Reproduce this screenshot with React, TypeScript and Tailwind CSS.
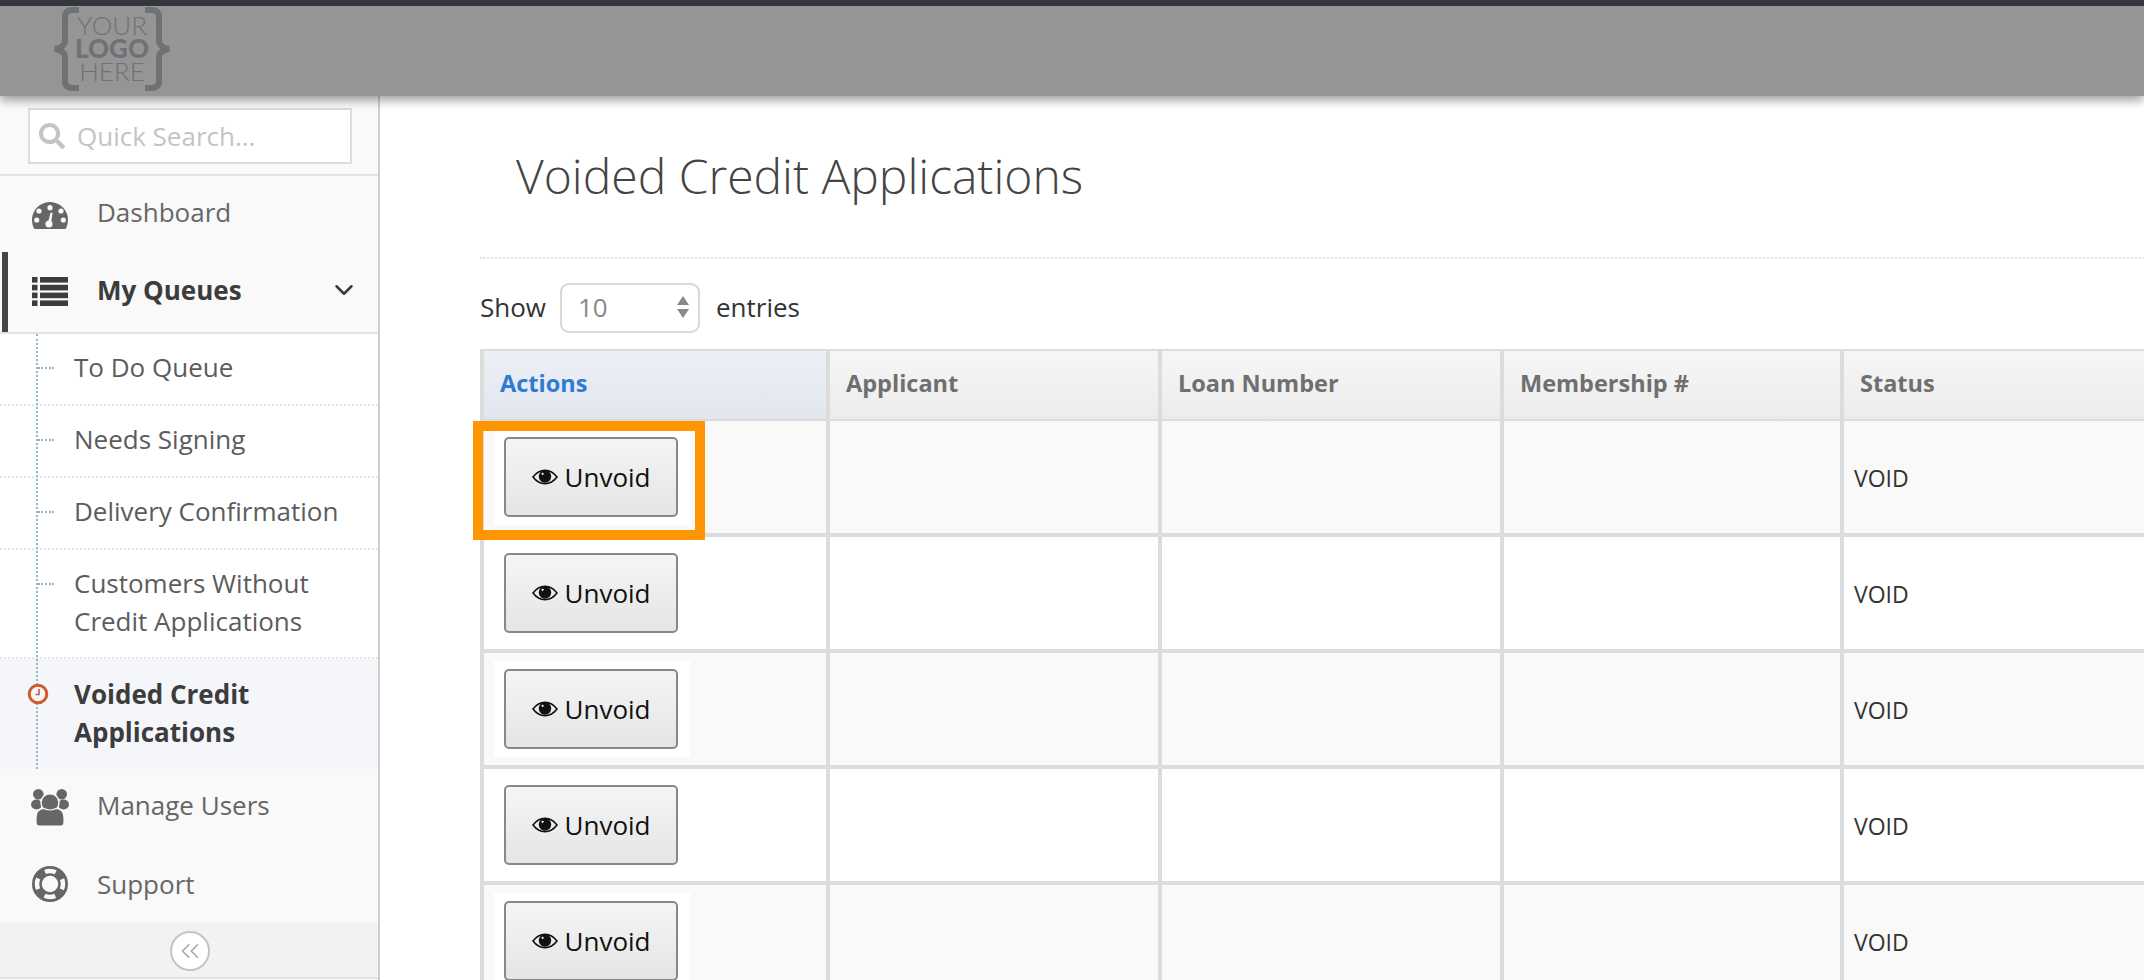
import { ChevronDown, ChevronsLeft } from 'lucide-react';
import { FaSearch } from 'react-icons/fa';

const font = "font-['Open_Sans','Liberation_Sans',sans-serif]";

const subItems = [
  { label: ['To Do Queue'], h: 'h-[72px]' },
  { label: ['Needs Signing'], h: 'h-[72px]' },
  { label: ['Delivery Confirmation'], h: 'h-[72px]' },
  { label: ['Customers Without', 'Credit Applications'], h: 'h-[109px]' },
];

const Logo = () => (
  <div className="relative mt-[1px] ml-[53px] flex h-[84px] w-[118px] flex-col items-center justify-center pb-[2px] text-[#707175]">
    <svg viewBox="0 0 118 84" className="absolute inset-0 h-full w-full" fill="none" stroke="currentColor" strokeWidth="6">
      <path d="M26 3h-6q-8 0-8 7v24q0 6-10 8 10 2 10 8v24q0 7 8 7h6" />
      <path d="M92 3h6q8 0 8 7v24q0 6 10 8-10 2-10 8v24q0 7-8 7h-6" />
    </svg>
    <span className="font-['Lato',sans-serif] text-[26px] leading-[23px] font-light">YOUR</span>
    <span className="font-['Lato',sans-serif] text-[26px] leading-[23px] font-black">LOGO</span>
    <span className="font-['Lato',sans-serif] text-[26px] leading-[23px] font-light">HERE</span>
  </div>
);

const GaugeIcon = () => (
  <svg viewBox="0 0 36 27" className="h-[27px] w-[36px]">
    <path d="M2.4 27A18 18 0 1 1 33.6 27z" fill="#666" />
    <g fill="#f9f9f9">
      <circle cx="18" cy="5.7" r="2.6" />
      <circle cx="7" cy="9" r="2.6" />
      <circle cx="29" cy="9" r="2.6" />
      <circle cx="4.7" cy="18" r="2.6" />
      <circle cx="31.3" cy="18" r="2.6" />
      <circle cx="17" cy="22" r="3.6" />
      <path d="M18.6 10.6l2 .5-1.6 10-3-.6z" />
    </g>
  </svg>
);

const ListIcon = () => (
  <svg viewBox="0 0 36 29" className="h-[29px] w-[36px]" fill="#3c3c3c">
    {[0, 7.8, 15.6, 23.4].map((y) => (
      <g key={y}>
        <rect x="0" y={y} width="5.5" height="5.6" />
        <rect x="8" y={y} width="28" height="5.6" />
      </g>
    ))}
  </svg>
);

const UsersIcon = () => (
  <svg viewBox="0 0 38 37" className="h-[37px] w-[38px]" fill="#666">
    <circle cx="7.3" cy="5.3" r="5.3" />
    <circle cx="30.7" cy="5.3" r="5.3" />
    <ellipse cx="5.5" cy="15.5" rx="5.5" ry="5" />
    <ellipse cx="32.5" cy="15.5" rx="5.5" ry="5" />
    <circle cx="19" cy="13.7" r="9" stroke="#f9f9f9" strokeWidth="1.4" />
    <path d="M5 34V29q0-9 8-9.5 6 3 12 0 8 .5 8 9.5v5q0 3-3 3H8q-3 0-3-3z" stroke="#f9f9f9" strokeWidth="1.2" />
  </svg>
);

const RingIcon = () => (
  <svg viewBox="0 0 36 36" className="h-[36px] w-[36px]">
    <circle cx="18" cy="18" r="18" fill="#666" />
    <circle cx="18" cy="18" r="13" fill="none" stroke="#f9f9f9" strokeWidth="4.5" strokeDasharray="11 9.42" strokeDashoffset="5.5" />
    <circle cx="18" cy="18" r="8.2" fill="#f9f9f9" />
  </svg>
);

const Sidebar = () => (
  <aside className="flex h-full w-[380px] shrink-0 flex-col border-r-2 border-[#cfcfcf] bg-[#f9f9f9]">
    <div className="h-[80px] shrink-0 border-b-2 border-[#e3e3e3] pt-[12px] pl-[28px]">
      <div className="flex h-[56px] w-[324px] items-center border-2 border-[#dcdcdf] bg-white pl-[9px]">
        <FaSearch className="h-[26px] w-[26px] text-[#c4c4c4]" />
        <span className="ml-[12px] text-[26px] text-[#c4c4c4]">Quick Search...</span>
      </div>
    </div>
    <div className="flex h-[78px] shrink-0 items-center pl-[32px] text-[#666]">
      <GaugeIcon />
      <span className="mb-[6px] ml-[29px] text-[26px]">Dashboard</span>
    </div>
    <div className="relative flex h-[80px] shrink-0 items-center border-b-2 border-[#e3e3e3] pl-[32px] text-[#3c3c3c]">
      <span className="absolute top-[-2px] left-[2px] h-[80px] w-[6px] bg-[#444]" />
      <div className="mb-[4px] flex">
        <ListIcon />
      </div>
      <span className="mb-[6px] ml-[29px] text-[26px] font-bold">My Queues</span>
      <ChevronDown className="absolute right-[19px] mb-[6px] h-[30px] w-[30px]" strokeWidth={2} />
    </div>
    <div className="relative shrink-0 bg-white">
      {subItems.map((item) => (
        <div key={item.label[0]} className={`relative flex ${item.h} items-start border-b-2 border-dotted border-[#e4e4e4] pt-[14px] pl-[74px] text-[26px] leading-[38px] text-[#5c5c5c]`}>
          <span className="absolute top-[33px] left-[38px] w-[16px] border-t-2 border-dotted border-[#8fb8d8]" />
          <div>
            {item.label.map((l) => (
              <div key={l}>{l}</div>
            ))}
          </div>
        </div>
      ))}
      <div className="relative h-[110px] bg-[#f5f6fa] pt-[16px] pl-[74px] text-[26px] leading-[38px] font-bold text-[#3c3c3c]">
        <div>Voided Credit</div>
        <div>Applications</div>
      </div>
      <span className="absolute top-0 bottom-0 left-[36px] border-l-2 border-dotted border-[#8fb8d8]" />
      <svg viewBox="0 0 22 22" className="absolute top-[349px] left-[27px] h-[22px] w-[22px]" fill="#f5f6fa" stroke="#cf5a2e">
        <circle cx="11" cy="11" r="8.8" strokeWidth="3" />
        <path d="M12 6v5.5H8.5" strokeWidth="1.6" fill="none" />
      </svg>
    </div>
    <div className="flex h-[76px] shrink-0 items-center pl-[31px] text-[#666]">
      <UsersIcon />
      <span className="mb-[4px] ml-[28px] text-[26px]">Manage Users</span>
    </div>
    <div className="flex h-[78px] shrink-0 items-center pl-[32px] text-[#666]">
      <RingIcon />
      <span className="ml-[29px] text-[26px]">Support</span>
    </div>
    <div className="flex h-[56px] shrink-0 items-center justify-center border-b-2 border-[#e3e3e3] bg-[#f2f2f2] pt-[1px] pl-[2px]">
      <div className="flex h-[40px] w-[40px] items-center justify-center rounded-full border-2 border-[#c4c4c4] bg-white">
        <ChevronsLeft className="h-[30px] w-[30px] text-[#a8a8a8]" strokeWidth={1.3} />
      </div>
    </div>
  </aside>
);

const EyeIcon = () => (
  <svg viewBox="0 0 26 16" className="h-[16px] w-[26px]">
    <path d="M1 8q5-6.6 12-6.6T25 8q-5 6.6-12 6.6T1 8z" fill="none" stroke="#111" strokeWidth="1.6" />
    <circle cx="13" cy="7.5" r="6.2" fill="#111" />
    <circle cx="10.6" cy="4.8" r="1.1" fill="#fff" />
  </svg>
);

const UnvoidButton = () => (
  <div className="h-[96px] w-[196px] bg-white pt-[8px] pl-[10px]">
    <button className="flex h-[80px] w-[174px] items-center justify-center gap-[7px] rounded-[5px] border-2 border-[#888] bg-gradient-to-b from-[#f5f5f5] to-[#e5e5e5] text-[26px] text-[#111]">
      <EyeIcon />
      Unvoid
    </button>
  </div>
);

const headerCols = [
  { name: 'Actions', w: 'w-[346px]', cls: 'text-[#2e7bd0] from-[#eceff5] to-[#e2e6ef] pl-[16px]' },
  { name: 'Applicant', w: 'w-[332px]', cls: 'text-[#6f6f6f] from-[#f6f6f6] to-[#ececec] pl-[16px]' },
  { name: 'Loan Number', w: 'w-[342px]', cls: 'text-[#6f6f6f] from-[#f6f6f6] to-[#ececec] pl-[16px]' },
  { name: 'Membership #', w: 'w-[340px]', cls: 'text-[#6f6f6f] from-[#f6f6f6] to-[#ececec] pl-[16px]' },
  { name: 'Status', w: 'w-[340px]', cls: 'text-[#6f6f6f] from-[#f6f6f6] to-[#ececec] pl-[16px]' },
];

const rows = [0, 1, 2, 3, 4];

const Main = () => (
  <main className="min-w-0 flex-1 overflow-hidden bg-white pt-[47px] pl-[100px]">
    <h1 className="ml-[36px] text-[48px] leading-[66px] font-light text-[#444]">Voided Credit Applications</h1>
    <div className="mt-[48px] h-0 w-[1800px] border-t-2 border-dotted border-[#e4e4e4]" />
    <div className="mt-[24px] flex h-[50px] items-center text-[26px] text-[#333]">
      <span className="mb-[2px]">Show</span>
      <div className="relative ml-[14px] flex h-[50px] w-[140px] items-center rounded-[9px] border-2 border-[#d8d8d8] pb-[2px] pl-[16px] text-[#888]">
        10
        <svg viewBox="0 0 14 24" className="absolute right-[8px] h-[24px] w-[14px]" fill="#8a8a8a">
          <path d="M7 1l6 9H1zM7 23l6-9H1z" />
        </svg>
      </div>
      <span className="mb-[2px] ml-[16px]">entries</span>
    </div>
    <div className="mt-[16px] w-[1800px] border-l-4 border-[#dcdcdc]">
      <div className="flex h-[72px] border-y-2 border-[#dcdcdc]">
        {headerCols.map((c) => (
          <div key={c.name} className={`${c.w} ${c.cls} flex shrink-0 items-center border-r-4 border-[#dcdcdc] bg-gradient-to-b pb-[2px] text-[23.5px] font-bold`}>
            {c.name}
          </div>
        ))}
      </div>
      {rows.map((r) => (
        <div key={r} className={`relative flex h-[116px] border-b-4 border-[#dcdcdc] ${r % 2 === 0 ? 'bg-[#f9f9f9]' : 'bg-white'}`}>
          {r === 0 && <div className="absolute top-0 left-[-11px] z-10 h-[119px] w-[232px] border-[10px] border-[#ff9500]" />}
          <div className="w-[346px] shrink-0 border-r-4 border-[#dcdcdc] pt-[8px] pl-[10px]">
            <UnvoidButton />
          </div>
          <div className="w-[332px] shrink-0 border-r-4 border-[#dcdcdc]" />
          <div className="w-[342px] shrink-0 border-r-4 border-[#dcdcdc]" />
          <div className="w-[340px] shrink-0 border-r-4 border-[#dcdcdc]" />
          <div className="flex w-[340px] shrink-0 items-center pt-[3px] pl-[10px] text-[23px] text-[#333]">VOID</div>
        </div>
      ))}
    </div>
  </main>
);

export default function App() {
  return (
    <div className={`${font} flex h-[980px] w-[2144px] flex-col overflow-hidden bg-white`}>
      <header className="relative z-10 h-[96px] shrink-0 border-t-[6px] border-[#33363a] bg-[#959595] shadow-[0_4px_10px_rgba(0,0,0,0.4)]">
        <Logo />
      </header>
      <div className="flex min-h-0 flex-1">
        <Sidebar />
        <Main />
      </div>
    </div>
  );
}
